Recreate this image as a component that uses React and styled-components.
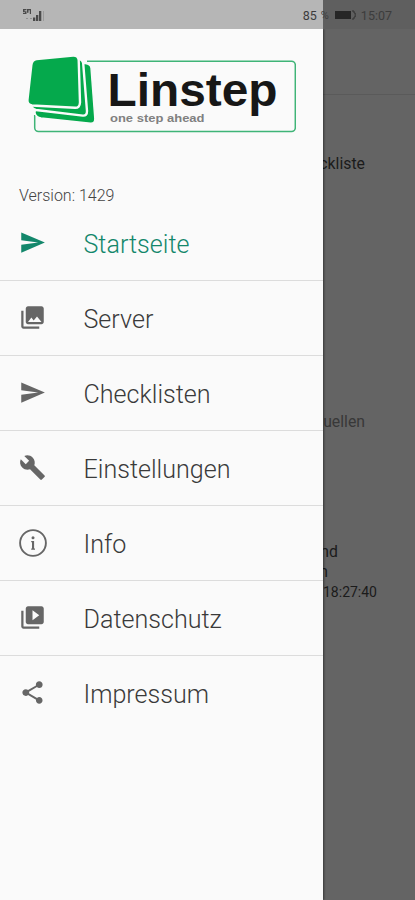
import React from 'react'
import styled, { createGlobalStyle } from 'styled-components'
import {
  MdBuild,
  MdPhotoLibrary,
  MdSend,
  MdShare,
  MdVideoLibrary,
} from 'react-icons/md'

const GlobalStyle = createGlobalStyle`
  body {
    margin: 0;
    background: #646464;
    font-family: Roboto, 'Liberation Sans', sans-serif;
  }
`

const Screen = styled.div`
  width: 415px;
  height: 900px;
  display: flex;
  flex-direction: column;
  overflow: hidden;
`

const StatusBar = styled.header`
  height: 29px;
  flex-shrink: 0;
  box-sizing: border-box;
  padding: 1px 23px 0 22px;
  display: flex;
  align-items: center;
  justify-content: space-between;
  background: linear-gradient(to right, #b6b6b6 323px, #5f5f5f 323px);
`

const StatusGroup = styled.div`
  display: flex;
  align-items: center;
  font-size: 12.5px;
  color: #3c3c3c;
`

const Percent = styled.span`
  width: 13px;
  margin-left: 4px;
  font-size: 11px;
`

const Clock = styled.span`
  margin-left: 4px;
`

const Body = styled.div`
  flex: 1;
  display: flex;
  min-height: 0;
`

const Drawer = styled.aside`
  width: 323px;
  flex-shrink: 0;
  background: #fafafa;
  box-shadow: 1px 0 2px rgba(0, 0, 0, 0.45);
  clip-path: inset(0 -6px 0 0);
  z-index: 1;
`

const LogoSvg = styled.svg`
  display: block;
  margin: 21px 0 0 20px;
`

const Version = styled.div`
  height: 20px;
  line-height: 20px;
  margin: 46px 0 0 19px;
  font-size: 16px;
  font-weight: 300;
  color: #444;
`

const Menu = styled.nav`
  display: flex;
  flex-direction: column;
`

const MenuItem = styled.a`
  height: 75px;
  box-sizing: border-box;
  display: flex;
  align-items: center;
  padding-left: 19px;
  border-bottom: 1px solid ${({ $last }) => ($last ? 'transparent' : '#dcdcdc')};
  color: ${({ $active }) => ($active ? '#13876b' : '#666')};
`

const ItemIcon = styled.span`
  width: 28px;
  height: 28px;
  margin-right: 36.5px;
  padding-bottom: 1px;
  display: flex;
  align-items: center;
`

const ItemLabel = styled.span`
  font-size: 25.1px;
  font-weight: 300;
  line-height: 30px;
  padding-top: 3px;
  color: ${({ $active }) => ($active ? '#13876b' : '#3a3a3a')};
`

const Page = styled.main`
  flex: 1;
  min-width: 0;
  overflow: hidden;
  background: #646464;
`

const Toolbar = styled.div`
  height: 65px;
  border-bottom: 1px solid #5a5a5a;
`

const PageText = styled.div`
  display: flex;
  justify-content: flex-end;
  height: 20px;
  line-height: 20px;
  margin-top: ${({ $top }) => $top}px;
  padding-right: ${({ $right }) => $right}px;
  font-size: ${({ $size }) => $size || 15.8}px;
  color: ${({ $muted }) => ($muted ? '#383838' : '#1b1b1b')};
`

const InfoIcon = () => (
  <svg width="28" height="28" viewBox="0 0 28 28" fill="none">
    <circle cx="14" cy="14" r="12.900" stroke="currentColor" strokeWidth="1.900" />
    <circle cx="14" cy="8.700" r="1.500" fill="currentColor" />
    <path d="M12.200 12h2.900v7.500h.9v1.200h-3.800v-1.200h.8v-6.300h-.8z" fill="currentColor" />
  </svg>
)

const Logo = () => (
  <LogoSvg width="276" height="90" viewBox="20 50 276 90">
    <path
      d="M87 61.200H291.500a3.800 3.800 0 0 1 3.800 3.800V127.700a3.800 3.800 0 0 1 -3.800 3.800H38.500a3.800 3.800 0 0 1 -3.800 -3.800V115"
      fill="none"
      stroke="#3fb477"
      strokeWidth="1.500"
    />
    <path
      d="M40 62L85.500 63.500q5 .5 5.500 4.500L94.800 118.500q.2 5 -4.300 4.700L41 118q-5 -.8 -6 -5z"
      fill="#05a94c"
      stroke="#fafafa"
      strokeWidth="1.400"
    />
    <path
      d="M36 59L78 58.800q4.500 .3 5.200 4.500L87 111q.1 5 -4.200 4.600L36 110q-4 -.8 -4.800 -4.500z"
      fill="#05a94c"
      stroke="#fafafa"
      strokeWidth="2.400"
    />
    <path
      d="M36.500 59L73 55.500q5.200 -.3 5.700 4.500L80 102.500q-.2 5.500 -5 5.300L32 105.500q-4.800 -.6 -4.600 -5.500L31.300 65q.6 -5.200 5.200 -6z"
      fill="#05a94c"
      stroke="#fafafa"
      strokeWidth="2.400"
    />
    <text
      x="107.500"
      y="106"
      fontFamily="Liberation Sans, Arial, sans-serif"
      fontWeight="700"
      fontSize="47"
      textLength="170"
      lengthAdjust="spacingAndGlyphs"
      fill="#171717"
    >
      Linstep
    </text>
    <text
      x="110"
      y="122"
      fontFamily="Liberation Sans, Arial, sans-serif"
      fontWeight="700"
      fontSize="11"
      textLength="94.500"
      lengthAdjust="spacingAndGlyphs"
      fill="#808080"
    >
      one step ahead
    </text>
  </LogoSvg>
)

const SignalIcon = () => (
  <svg width="24" height="14" viewBox="0 0 24 14" fill="#4a4a4a">
    <path d="M1 1h3.500v1.200H2.500v1H4.500v2.800H1V4.800h2v-.8H1zM5 1h4v5H7.800V2.200H6.500V4.800H5z" />
    <path d="M4 10h2v1H4zM8 10h2v1H8z" opacity=".35" />
    <path d="M11 9.500h2.300V13H11zM14 7h2.300v6H14zM17 3h2.300v10H17z" />
    <path d="M21 3h.8v10H21z" opacity=".3" />
  </svg>
)

const BatteryIcon = () => (
  <svg width="23" height="10" viewBox="0 0 23 10">
    <rect x="1" y="1" width="16" height="8" fill="#262626" />
    <path d="M18 1h2v2h1.200v4H20v2h-2" fill="none" stroke="#333" />
  </svg>
)

const items = [
  { label: 'Startseite', icon: <MdSend size={27} />, active: true },
  { label: 'Server', icon: <MdPhotoLibrary size={27} /> },
  { label: 'Checklisten', icon: <MdSend size={27} /> },
  { label: 'Einstellungen', icon: <MdBuild size={27} /> },
  { label: 'Info', icon: <InfoIcon /> },
  { label: 'Datenschutz', icon: <MdVideoLibrary size={27} /> },
  { label: 'Impressum', icon: <MdShare size={27} /> },
]

const App = () => (
  <Screen>
    <GlobalStyle />
    <StatusBar>
      <StatusGroup>
        <SignalIcon />
      </StatusGroup>
      <StatusGroup>
        85
        <Percent>%</Percent>
        <BatteryIcon />
        <Clock>15:07</Clock>
      </StatusGroup>
    </StatusBar>
    <Body>
      <Drawer>
        <Logo />
        <Version>Version: 1429</Version>
        <Menu>
          {items.map(({ label, icon, active }, index) => (
            <MenuItem
              key={label}
              $active={active}
              $last={index === items.length - 1}
            >
              <ItemIcon>{icon}</ItemIcon>
              <ItemLabel $active={active}>{label}</ItemLabel>
            </MenuItem>
          ))}
        </Menu>
      </Drawer>
      <Page>
        <Toolbar />
        <PageText $top={59} $right={50}>
          ckliste
        </PageText>
        <PageText $top={238} $right={50} $muted>
          uellen
        </PageText>
        <PageText $top={110} $right={77}>
          nd
        </PageText>
        <PageText $top={0} $right={87}>
          n
        </PageText>
        <PageText $top={0} $right={38} $size={14}>
          18:27:40
        </PageText>
      </Page>
    </Body>
  </Screen>
)

export default App
